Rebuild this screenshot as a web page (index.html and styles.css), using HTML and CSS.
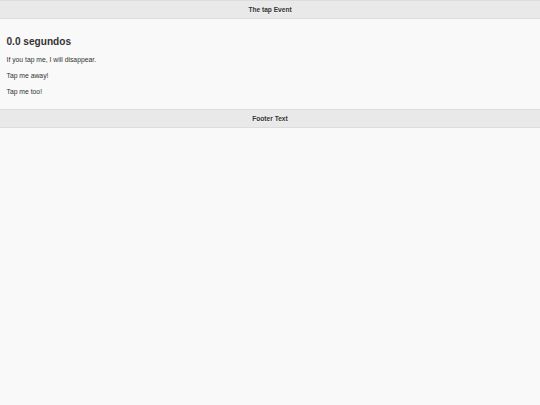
FILE: index.html
```html
<!DOCTYPE html>
<html>
<head>
<meta charset="utf-8">
<title>The tap Event</title>
<link rel="stylesheet" href="styles.css">
</head>
<body>
<div class="page">
  <div class="bar header"><h1 class="bar-title">The tap Event</h1></div>
  <div class="content">
    <h2 class="timer">0.0 segundos</h2>
    <p class="tap">If you tap me, I will disappear.</p>
    <p class="tap">Tap me away!</p>
    <p class="tap">Tap me too!</p>
  </div>
  <div class="bar footer"><h4 class="bar-title">Footer Text</h4></div>
</div>
</body>
</html>
```

FILE: styles.css
```css
html, body {
  margin: 0;
  padding: 0;
  background: #f9f9f9;
}
body {
  font-family: "Liberation Sans", Arial, sans-serif;
  color: #333;
  font-size: 6.8px;
}
.page {
  min-height: 405px;
  background: #f9f9f9;
}
.bar {
  background: #e9e9e9;
  border: 1px solid #ddd;
  border-left: 0;
  border-right: 0;
  color: #333;
  text-shadow: 0 1px 0 #f3f3f3;
}
.bar-title {
  margin: 0;
  height: 17px;
  line-height: 17px;
  font-size: 6.6px;
  font-weight: bold;
  text-align: center;
}
.content {
  padding: 8px 6.5px 5px;
}
.timer {
  margin: 9px 0 8px;
  font-size: 10.1px;
  line-height: 12px;
  font-weight: bold;
}
.tap {
  margin: 0 0 8px;
  font-size: 6.8px;
  line-height: 8px;
}
```
